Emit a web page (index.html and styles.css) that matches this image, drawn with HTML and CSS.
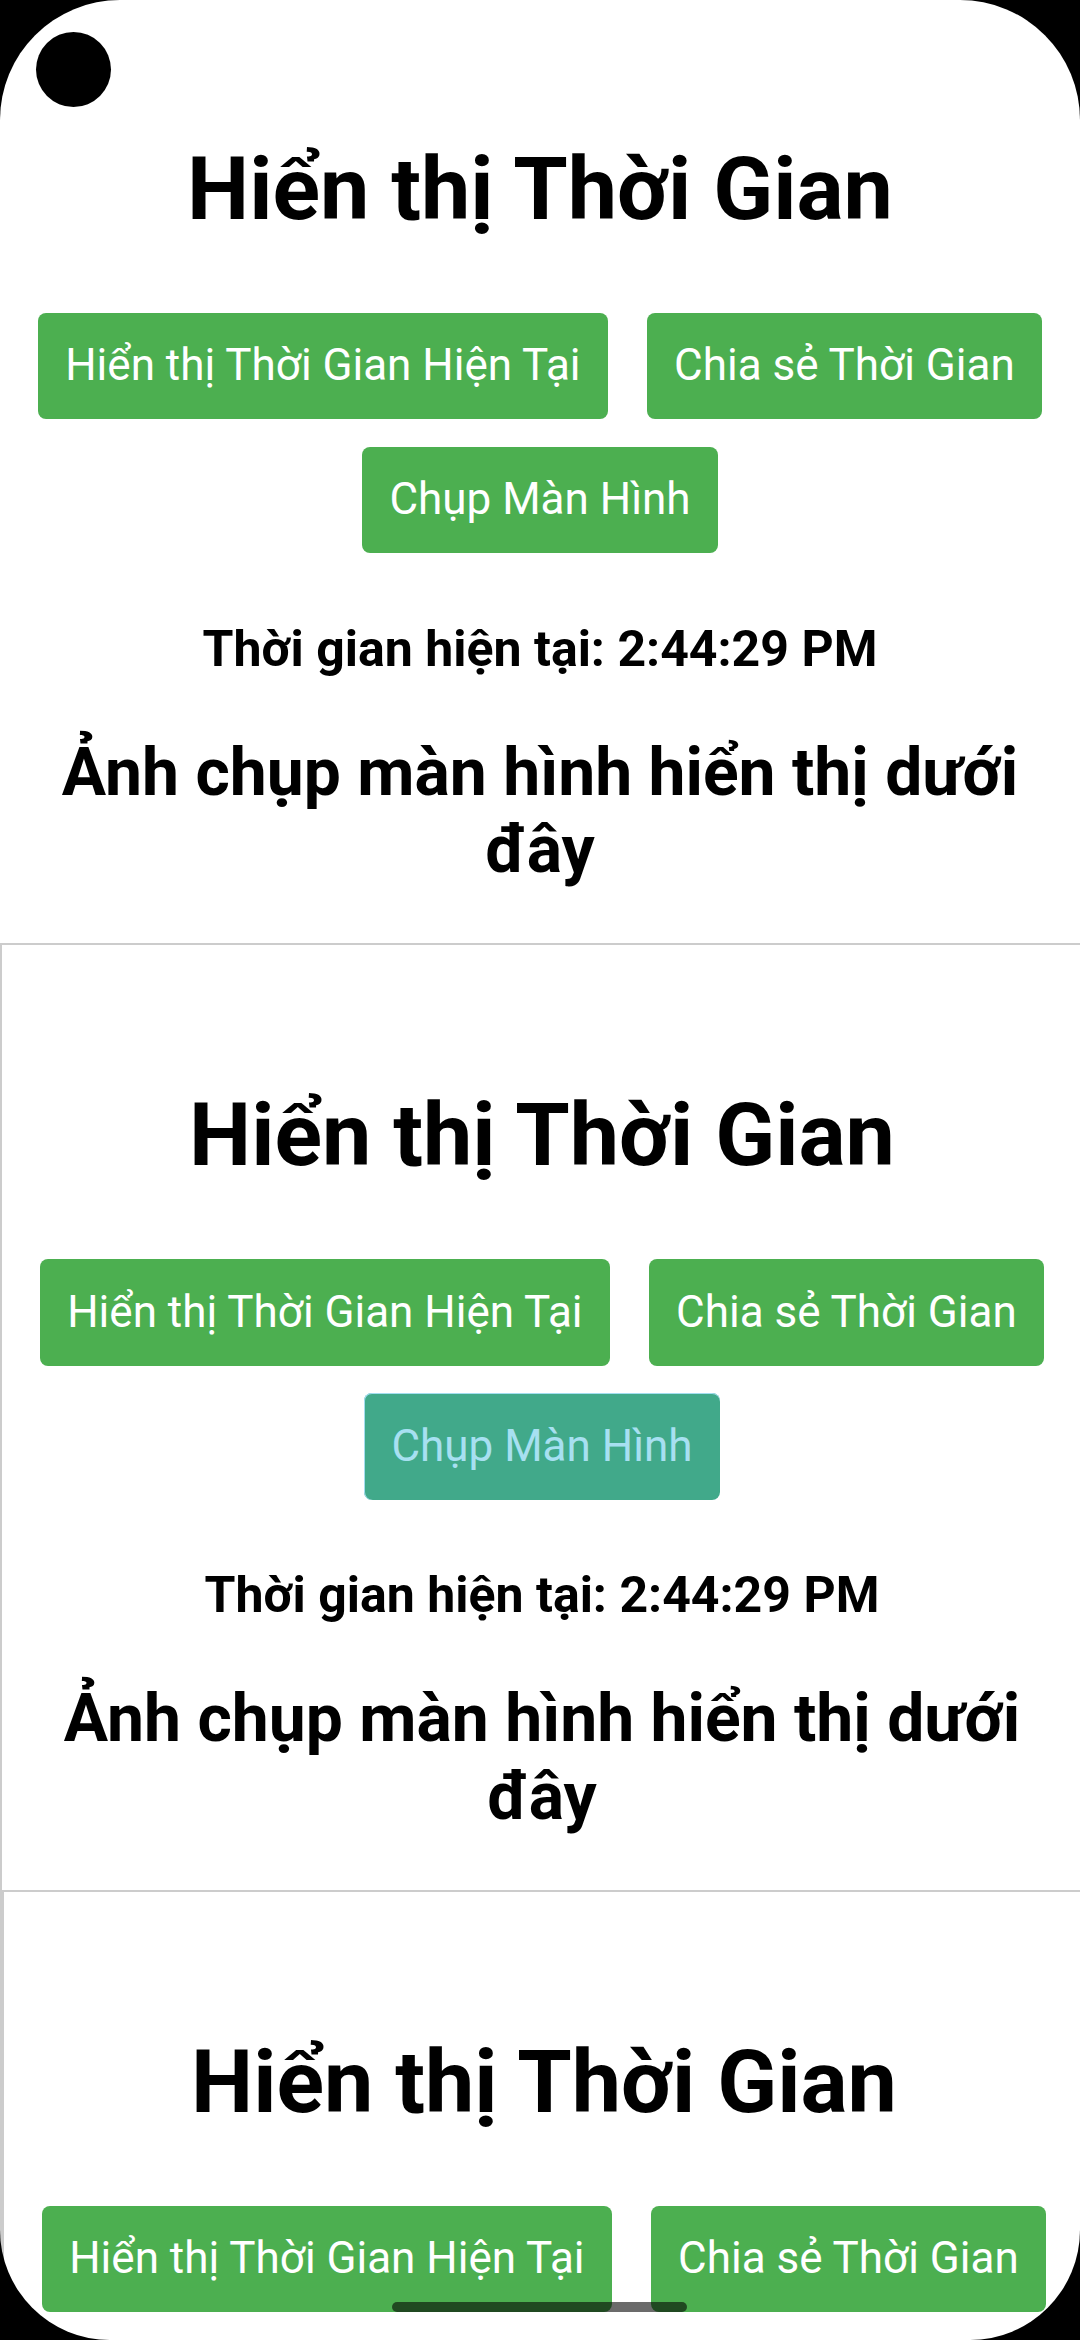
FILE: index.html
```html
<!DOCTYPE html>
<html lang="vi">
<head>
<meta charset="utf-8">
<title>Hiển thị Thời Gian</title>
<link rel="stylesheet" href="styles.css">
</head>
<body>
<div class="page">
  <h1 class="title">Hiển thị Thời Gian</h1>
  <div class="actions">
    <button class="btn">Hiển thị Thời Gian Hiện Tại</button>
    <button class="btn">Chia sẻ Thời Gian</button>
    <button class="btn">Chụp Màn Hình</button>
  </div>
  <h3 class="time">Thời gian hiện tại: 2:44:29 PM</h3>
  <h2 class="shot-title">Ảnh chụp màn hình hiển thị dưới đây</h2>
  <div class="shot">
    <div class="page">
      <h1 class="title">Hiển thị Thời Gian</h1>
      <div class="actions">
        <button class="btn">Hiển thị Thời Gian Hiện Tại</button>
        <button class="btn">Chia sẻ Thời Gian</button>
        <button class="btn btn-tapped">Chụp Màn Hình</button>
      </div>
      <h3 class="time">Thời gian hiện tại: 2:44:29 PM</h3>
      <h2 class="shot-title">Ảnh chụp màn hình hiển thị dưới đây</h2>
      <div class="shot">
        <div class="page page-clip">
          <h1 class="title">Hiển thị Thời Gian</h1>
          <div class="actions">
            <button class="btn">Hiển thị Thời Gian Hiện Tại</button>
            <button class="btn">Chia sẻ Thời Gian</button>
          </div>
        </div>
      </div>
    </div>
  </div>
</div>
<div class="screen-mask"></div>
<div class="camera"></div>
<div class="home-bar"></div>
</body>
</html>
```
FILE: styles.css
```css
html, body {
  margin: 0;
  padding: 0;
  overflow: hidden;
  background: #fff;
}
body {
  width: 1080px;
  height: 2340px;
  font-family: Roboto, "Noto Sans", "Liberation Sans", sans-serif;
  color: #000;
}
.page {
  padding: 78px 22px 0;
  text-align: center;
  font-size: 44px;
}
.page-clip {
  min-height: 700px;
}
.title {
  font-size: 88px;
  font-weight: 700;
  line-height: 103px;
  margin: 59px 0;
}
.actions {
  display: flex;
  flex-wrap: wrap;
  justify-content: center;
  column-gap: 38.5px;
  row-gap: 27.5px;
  padding: 13.75px 0;
}
.btn {
  background: #4caf50;
  color: #fff;
  border: none;
  border-radius: 8px;
  font-family: Roboto, "Noto Sans", "Liberation Sans", sans-serif;
  font-size: 44px;
  font-weight: 400;
  line-height: 51.6px;
  padding: 27.5px 27.5px;
  margin: 0;
}
.btn-tapped {
  background: #41a98a;
  color: #a7e0f1;
  box-shadow: inset 0 1px 0 #a3def0, inset 1px 0 0 #a3def0;
}
.time {
  font-size: 50px;
  font-weight: 700;
  line-height: 60.3px;
  margin: 51.5px 0;
}
.shot-title {
  font-size: 66px;
  font-weight: 700;
  line-height: 77.4px;
  margin: 54.8px 0;
}
.shot {
  margin-left: -22px;
  width: 1080px;
  border: 2px solid #cccccc;
  padding-top: 1px;
}
.screen-mask {
  position: fixed;
  left: 0;
  top: 0;
  width: 1080px;
  height: 2340px;
  border-radius: 120px 120px 110px 110px;
  box-shadow: 0 0 0 400px #000;
  pointer-events: none;
  z-index: 10;
}
.camera {
  position: fixed;
  left: 36px;
  top: 32px;
  width: 75px;
  height: 75px;
  border-radius: 50%;
  background: #000;
  z-index: 11;
}
.home-bar {
  position: fixed;
  left: 392px;
  top: 2302px;
  width: 295px;
  height: 10px;
  border-radius: 5px;
  background: rgba(0, 0, 0, 0.58);
  z-index: 11;
}
```
